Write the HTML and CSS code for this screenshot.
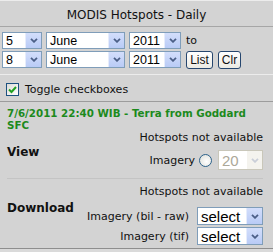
FILE: index.html
```html
<!DOCTYPE html>
<html>
<head>
<meta charset="utf-8">
<link rel="stylesheet" href="styles.css">
</head>
<body>
<div class="panel">
  <div class="title">MODIS Hotspots - Daily</div>
  <div class="dates">
    <div class="row">
      <span class="sel w-day"><span class="val">5</span><span class="arr"><svg width="8" height="5" viewBox="0 0 8 5"><polyline points="1,0.8 4,3.8 7,0.8" fill="none" stroke="#4b5f87" stroke-width="1.8"/></svg></span></span>
      <span class="sel w-mon"><span class="val">June</span><span class="arr"><svg width="8" height="5" viewBox="0 0 8 5"><polyline points="1,0.8 4,3.8 7,0.8" fill="none" stroke="#4b5f87" stroke-width="1.8"/></svg></span></span>
      <span class="sel w-yr"><span class="val">2011</span><span class="arr"><svg width="8" height="5" viewBox="0 0 8 5"><polyline points="1,0.8 4,3.8 7,0.8" fill="none" stroke="#4b5f87" stroke-width="1.8"/></svg></span></span>
      <span class="to">to</span>
    </div>
    <div class="row">
      <span class="sel w-day"><span class="val">8</span><span class="arr"><svg width="8" height="5" viewBox="0 0 8 5"><polyline points="1,0.8 4,3.8 7,0.8" fill="none" stroke="#4b5f87" stroke-width="1.8"/></svg></span></span>
      <span class="sel w-mon"><span class="val">June</span><span class="arr"><svg width="8" height="5" viewBox="0 0 8 5"><polyline points="1,0.8 4,3.8 7,0.8" fill="none" stroke="#4b5f87" stroke-width="1.8"/></svg></span></span>
      <span class="sel w-yr"><span class="val">2011</span><span class="arr"><svg width="8" height="5" viewBox="0 0 8 5"><polyline points="1,0.8 4,3.8 7,0.8" fill="none" stroke="#4b5f87" stroke-width="1.8"/></svg></span></span>
      <span class="btn btn-list">List</span>
      <span class="btn btn-clr">Clr</span>
    </div>
  </div>
  <div class="toggle">
    <span class="cb"><svg width="9" height="8" viewBox="0 0 9 8"><polyline points="1,3.5 3.5,6 8,1" fill="none" stroke="#21a121" stroke-width="2"/></svg></span>
    <span>Toggle checkboxes</span>
  </div>
  <div class="body">
    <div class="info">7/6/2011 22:40 WIB - Terra from Goddard SFC</div>
    <div class="section sec-view">
      <div class="label">View</div>
      <div class="content">
        <div class="na">Hotspots not available</div>
        <div class="line">
          <span>Imagery</span>
          <span class="radio"></span>
          <span class="sel sel-dis"><span class="val">20</span><span class="arr"><svg width="8" height="5" viewBox="0 0 8 5"><polyline points="1,0.8 4,3.8 7,0.8" fill="none" stroke="#c9ced8" stroke-width="1.8"/></svg></span></span>
        </div>
      </div>
    </div>
    <div class="section sec-dl">
      <div class="label">Download</div>
      <div class="content">
        <div class="na">Hotspots not available</div>
        <div class="line line-first">
          <span>Imagery (bil - raw)</span>
          <span class="sel sel-big"><span class="val">select</span><span class="arr"><svg width="8" height="5" viewBox="0 0 8 5"><polyline points="1,0.8 4,3.8 7,0.8" fill="none" stroke="#4b5f87" stroke-width="1.8"/></svg></span></span>
        </div>
        <div class="line">
          <span>Imagery (tif)</span>
          <span class="sel sel-big"><span class="val">select</span><span class="arr"><svg width="8" height="5" viewBox="0 0 8 5"><polyline points="1,0.8 4,3.8 7,0.8" fill="none" stroke="#4b5f87" stroke-width="1.8"/></svg></span></span>
        </div>
      </div>
    </div>
  </div>
</div>
</body>
</html>
```

FILE: styles.css
```css
html, body {
  margin: 0;
  padding: 0;
  background: #dadada;
}

.panel {
  width: 273px;
  height: 249px;
  box-sizing: border-box;
  background: #d3d3d3;
  border-bottom: 1px solid #8e8e8e;
  font-family: "DejaVu Sans", Verdana, sans-serif;
  font-size: 11px;
  color: #111;
  overflow: hidden;
}

.title {
  height: 27px;
  box-sizing: border-box;
  border-top: 1px solid #ececec;
  border-bottom: 1px solid #a6a6a6;
  display: flex;
  align-items: center;
  justify-content: center;
  font-size: 12px;
  padding-top: 2px;
}

.dates {
  display: flex;
  flex-direction: column;
  gap: 2px;
  padding: 5px 2px 6px;
  border-bottom: 1px solid #ececec;
}

.row {
  display: flex;
  align-items: center;
  gap: 4px;
  height: 17px;
}

.sel {
  height: 17px;
  box-sizing: border-box;
  border: 1px solid #7f9db9;
  background: #fff;
  display: flex;
  align-items: center;
  justify-content: space-between;
  font-family: "Liberation Sans", Arial, sans-serif;
  font-size: 12.5px;
  color: #000;
}

.val {
  padding-left: 3px;
}

.arr {
  width: 15px;
  height: 15px;
  align-self: center;
  background: linear-gradient(#d3defb, #b9cbf6);
  display: flex;
  align-items: center;
  justify-content: center;
  border-left: 1px solid #e6ecfb;
}

.w-day { width: 40px; }
.w-mon { width: 79px; }
.w-yr { width: 52px; }

.to {
  margin-left: 1px;
}

.btn {
  height: 18px;
  box-sizing: border-box;
  border: 1px solid #26466e;
  border-radius: 3px;
  background: linear-gradient(#ffffff, #ecebe4);
  display: flex;
  align-items: center;
  justify-content: center;
  font-family: "Liberation Sans", Arial, sans-serif;
  font-size: 12px;
}

.btn-list { width: 27px; margin-left: 1px; }
.btn-clr { width: 23px; margin-left: 1px; }

.toggle {
  display: flex;
  align-items: center;
  gap: 6px;
  padding: 8px 6px 5px;
  height: 13px;
  border-bottom: 1px solid #9c9c9c;
}

.cb {
  width: 13px;
  height: 13px;
  box-sizing: border-box;
  border: 1px solid #1c5180;
  background: linear-gradient(135deg, #dcdcd7, #ffffff);
  display: flex;
  align-items: center;
  justify-content: center;
}

.body {
  padding: 5px 10px 0 7px;
}

.info {
  color: #1c8a1c;
  font-weight: bold;
  font-size: 10.3px;
  line-height: 12px;
  max-width: 250px;
}

.section {
  display: flex;
  align-items: flex-start;
  justify-content: space-between;
}

.label {
  font-weight: bold;
  font-size: 12px;
  line-height: 14px;
}

.content {
  display: flex;
  flex-direction: column;
  align-items: flex-end;
}

.sec-view {
  padding-bottom: 8px;
  border-bottom: 1px solid #c4c4c4;
}

.sec-view .label {
  margin-top: 14px;
}

.na {
  line-height: 13px;
}

.line {
  display: flex;
  align-items: center;
  gap: 6px;
}

.sec-view .line {
  margin-top: 6px;
}

.radio {
  width: 11px;
  height: 11px;
  border-radius: 50%;
  border: 1px solid #2c628b;
  background: radial-gradient(circle at 60% 60%, #ffffff, #dcdcd6);
  margin-left: -2px;
}

.sel-dis {
  width: 45px;
  height: 20px;
  border-color: #c9c7ba;
  background: #fff;
  color: #aca899;
  font-size: 15px;
}

.sel-dis .arr {
  height: 18px;
  background: #f4f3ee;
  border-left: 1px solid #fff;
}

.sec-dl {
  padding-top: 6px;
}

.sec-dl .label {
  margin-top: 16px;
}

.sec-dl .line {
  margin-top: 2px;
  gap: 8px;
}

.sec-dl .line-first {
  margin-top: 9px;
}

.sel-big {
  width: 66px;
  height: 18px;
  font-size: 15px;
}

.sel-big .arr {
  height: 16px;
}
```
